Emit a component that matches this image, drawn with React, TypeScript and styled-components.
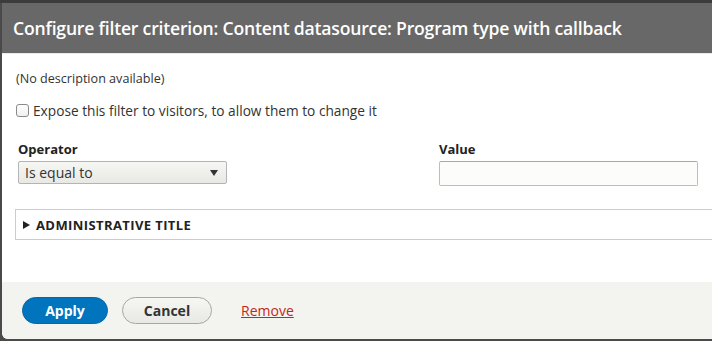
import styled, { createGlobalStyle } from 'styled-components';

const GlobalStyle = createGlobalStyle`
    html, body {
        margin: 0;
        padding: 0;
        background: #4a4a4a;
        overflow: hidden;
    }
    body {
        font-family: "Open Sans", "Liberation Sans", sans-serif;
        color: #333;
    }
`;

const Backdrop = styled.div`
    width: 712px;
    height: 341px;
    padding: 3px 0 0 2px;
    box-sizing: border-box;
    background: linear-gradient(#3c3c3c 0, #3c3c3c 3px, #4a4a4a 3px);
    overflow: hidden;
`;

const Dialog = styled.div`
    width: 730px;
    height: 336px;
    display: flex;
    flex-direction: column;
    background: #fff;
    border-radius: 0 0 6px 6px;
    overflow: hidden;
`;

const TitleBar = styled.div`
    height: 50px;
    display: flex;
    align-items: center;
    padding: 0 0 0 11px;
    background: #686868;
    border-bottom: 1px solid #e9e9e9;
    color: #fff;
    font-size: 17.6px;
    font-weight: 600;
    letter-spacing: -0.2px;
`;

const Body = styled.div`
    flex: 1;
    padding: 16px 0 0 14px;
`;

const Description = styled.p`
    margin: 0 0 14px;
    font-size: 12.6px;
`;

const CheckRow = styled.label`
    display: flex;
    align-items: center;
    gap: 4px;
    font-size: 13.7px;
    margin-bottom: 20px;
`;

const Checkbox = styled.span`
    width: 11px;
    height: 11px;
    border: 1px solid #8a8a8a;
    border-radius: 3px;
    background: linear-gradient(#fff, #f0f0f0);
`;

const Fields = styled.div`
    display: grid;
    grid-template-columns: 421px 260px;
    padding-left: 2px;
    margin-bottom: 23px;
`;

const Field = styled.div`
    display: flex;
    flex-direction: column;
    gap: 3px;
`;

const Label = styled.span`
    font-size: 13px;
    font-weight: 700;
    color: #222;
`;

const Select = styled.div`
    width: 209px;
    height: 23px;
    box-sizing: border-box;
    display: flex;
    align-items: center;
    justify-content: space-between;
    padding: 0 8px 0 6px;
    border: 1px solid #b4b4b4;
    border-radius: 2px;
    background: linear-gradient(#f6f6f3, #e8e8e4);
    font-size: 14px;
    color: #333;
`;

const Arrow = styled.span`
    width: 0;
    height: 0;
    border-left: 4.5px solid transparent;
    border-right: 4.5px solid transparent;
    border-top: 6px solid #333;
`;

const Input = styled.div`
    width: 259px;
    height: 25px;
    box-sizing: border-box;
    border: 1px solid #bdbdbd;
    border-top-color: #a8a8a8;
    border-radius: 2px;
    background: #fcfcfa;
`;

const Details = styled.div`
    height: 31px;
    box-sizing: border-box;
    margin-left: -1px;
    display: flex;
    align-items: center;
    gap: 6px;
    padding-left: 7px;
    border: 1px solid #ccc;
    border-right: none;
    font-size: 13px;
    font-weight: 700;
    color: #222;
    letter-spacing: 0.4px;
`;

const Caret = styled.span`
    width: 0;
    height: 0;
    border-top: 4px solid transparent;
    border-bottom: 4px solid transparent;
    border-left: 7px solid #222;
`;

const Footer = styled.div`
    height: 57px;
    display: flex;
    align-items: center;
    gap: 14px;
    padding: 0 0 0 20px;
    background: #f3f3ef;
`;

const Button = styled.button<{ $primary?: boolean }>`
    height: 27px;
    border-radius: 14px;
    font-family: inherit;
    font-size: 14px;
    font-weight: 700;
    padding: 0;
    border: 1px solid ${p => (p.$primary ? '#0068aa' : '#a6a6a6')};
    background: ${p => (p.$primary ? '#0074bd' : 'linear-gradient(#f6f6f3, #e8e8e4)')};
    color: ${p => (p.$primary ? '#fff' : '#333')};
    width: ${p => (p.$primary ? '86px' : '90px')};
`;

const RemoveLink = styled.a`
    margin-left: 15px;
    font-size: 14px;
    color: #c4261c;
    text-decoration: underline;
`;

export default function App() {
    return (
        <>
            <GlobalStyle />
            <Backdrop>
                <Dialog>
                    <TitleBar>Configure filter criterion: Content datasource: Program type with callback</TitleBar>
                    <Body>
                        <Description>(No description available)</Description>
                        <CheckRow>
                            <Checkbox />
                            Expose this filter to visitors, to allow them to change it
                        </CheckRow>
                        <Fields>
                            <Field>
                                <Label>Operator</Label>
                                <Select>
                                    Is equal to
                                    <Arrow />
                                </Select>
                            </Field>
                            <Field>
                                <Label>Value</Label>
                                <Input />
                            </Field>
                        </Fields>
                        <Details>
                            <Caret />
                            ADMINISTRATIVE TITLE
                        </Details>
                    </Body>
                    <Footer>
                        <Button $primary>Apply</Button>
                        <Button>Cancel</Button>
                        <RemoveLink>Remove</RemoveLink>
                    </Footer>
                </Dialog>
            </Backdrop>
        </>
    );
}
